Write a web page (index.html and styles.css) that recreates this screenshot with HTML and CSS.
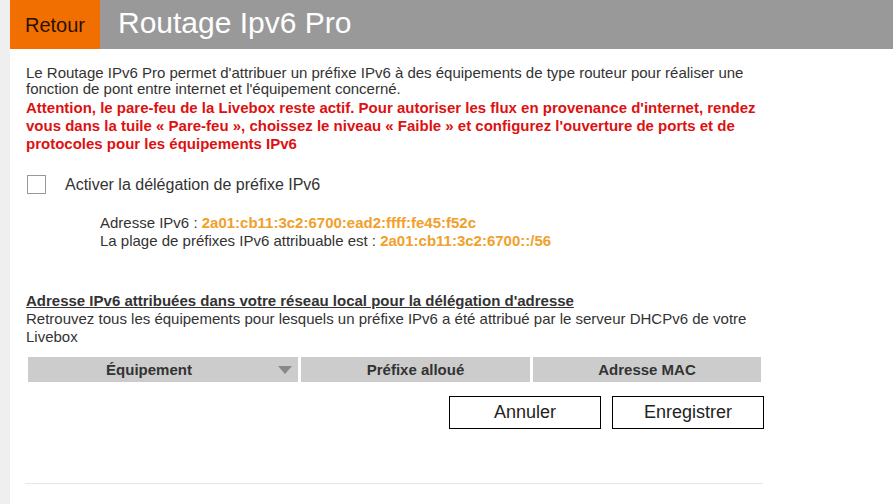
FILE: index.html
```html
<!DOCTYPE html>
<html lang="fr">
<head>
<meta charset="utf-8">
<title>Routage Ipv6 Pro</title>
<link rel="stylesheet" href="styles.css">
</head>
<body>
<div class="page">
  <header class="topbar">
    <a class="back">Retour</a>
    <h1 class="title">Routage Ipv6 Pro</h1>
  </header>
  <main class="content">
    <p class="intro">Le Routage IPv6 Pro permet d'attribuer un préfixe IPv6 à des équipements de type routeur pour réaliser une fonction de pont entre internet et l'équipement concerné.</p>
    <p class="warning">Attention, le pare-feu de la Livebox reste actif. Pour autoriser les flux en provenance d'internet, rendez vous dans la tuile « Pare-feu », choissez le niveau « Faible » et configurez l'ouverture de ports et de protocoles pour les équipements IPv6</p>
    <label class="check-row">
      <span class="checkbox"></span>
      <span class="check-label">Activer la délégation de préfixe IPv6</span>
    </label>
    <div class="info">
      <div>Adresse IPv6 : <b class="val">2a01:cb11:3c2:6700:ead2:ffff:fe45:f52c</b></div>
      <div>La plage de préfixes IPv6 attribuable est : <b class="val">2a01:cb11:3c2:6700::/56</b></div>
    </div>
    <h2 class="section-title">Adresse IPv6 attribuées dans votre réseau local pour la délégation d'adresse</h2>
    <p class="section-desc">Retrouvez tous les équipements pour lesquels un préfixe IPv6 a été attribué par le serveur DHCPv6 de votre Livebox</p>
    <div class="table-head">
      <div class="col col-1">Équipement<span class="sort"></span></div>
      <div class="col col-2">Préfixe alloué</div>
      <div class="col col-3">Adresse MAC</div>
    </div>
    <div class="actions">
      <button class="btn">Annuler</button>
      <button class="btn">Enregistrer</button>
    </div>
    <hr class="rule">
  </main>
</div>
</body>
</html>
```
FILE: styles.css
```css
html, body {
  margin: 0;
  padding: 0;
  background: #efefef;
  font-family: "Liberation Sans", Arial, sans-serif;
}
.page {
  margin-left: 10px;
  background: #fff;
  min-height: 504px;
}
.topbar {
  display: flex;
  height: 49px;
  background: #999999;
}
.back {
  width: 90px;
  background: #f16e00;
  color: #2b1200;
  font-size: 20px;
  display: flex;
  align-items: center;
  justify-content: center;
  padding-top: 1px;
  box-sizing: border-box;
}
.title {
  margin: 0;
  padding-left: 18px;
  color: #fff;
  font-weight: normal;
  font-size: 30px;
  line-height: 46px;
}
.content {
  padding: 16px 0 0 16px;
  width: 738px;
  color: #333;
  font-size: 15px;
}
.intro {
  margin: 0;
  line-height: 16px;
  color: #333;
  width: 735px;
}
.warning {
  margin: 2px 0 0;
  color: #dd1111;
  font-weight: bold;
  line-height: 18px;
  width: 735px;
}
.check-row {
  display: flex;
  align-items: center;
  margin-top: 22px;
  margin-left: 1px;
}
.checkbox {
  width: 17px;
  height: 17px;
  border: 1px solid #999;
  background: #fff;
}
.check-label {
  margin-left: 19px;
  font-size: 16px;
  color: #333;
}
.info {
  margin: 20px 0 0 74px;
  line-height: 18px;
  color: #333;
}
.val {
  color: #f1a02b;
}
.section-title {
  margin: 42px 0 0;
  font-size: 15px;
  font-weight: bold;
  text-decoration: underline;
  color: #333;
  line-height: 18px;
}
.section-desc {
  margin: 0;
  line-height: 18px;
  width: 740px;
}
.table-head {
  display: grid;
  grid-template-columns: 270px 229px 228px;
  column-gap: 3px;
  margin: 11px 0 0 2px;
  height: 25px;
  width: 733px;
}
.col {
  background: #cccccc;
  font-weight: bold;
  color: #333;
  display: flex;
  align-items: center;
  justify-content: center;
  position: relative;
}
.col-1 {
  padding-right: 28px;
}
.sort {
  position: absolute;
  right: 6px;
  top: 9px;
  width: 0;
  height: 0;
  border-left: 7px solid transparent;
  border-right: 7px solid transparent;
  border-top: 8px solid #888;
}
.actions {
  display: flex;
  justify-content: flex-end;
  gap: 11px;
  margin-top: 14px;
}
.btn {
  width: 152px;
  height: 33px;
  border: 1px solid #000;
  background: #fff;
  font-family: "Liberation Sans", Arial, sans-serif;
  font-size: 18px;
  color: #222;
  padding: 0;
}
.rule {
  margin: 54px 0 0 -1px;
  border: 0;
  border-top: 1px solid #e6e6e6;
  width: 738px;
}
```
